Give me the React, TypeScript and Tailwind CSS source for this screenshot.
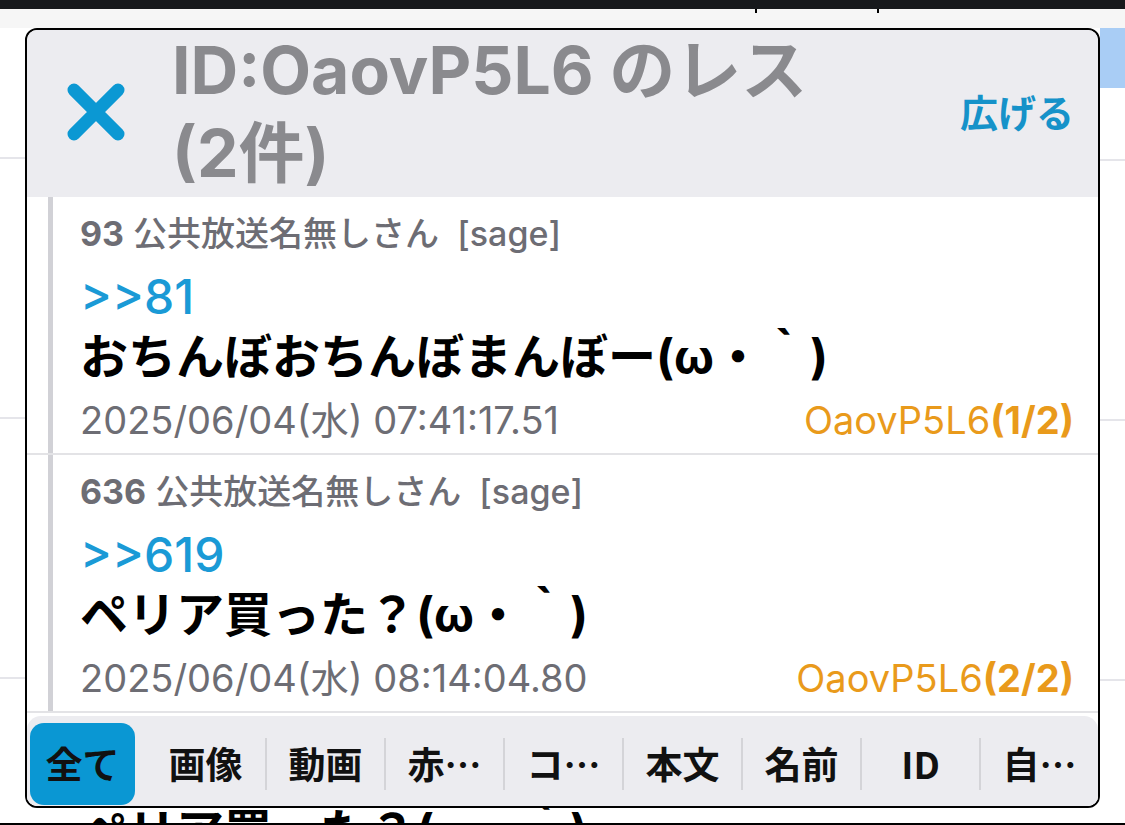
import React from "react";

type Post = {
  no: string;
  anchor: string;
  body: string;
  date: string;
  id: string;
  count: string;
};

const posts: Post[] = [
  {
    no: "93",
    anchor: ">>81",
    body: "おちんぼおちんぼまんぼー(ω・｀)",
    date: "2025/06/04(水) 07:41:17.51",
    id: "OaovP5L6",
    count: "(1/2)",
  },
  {
    no: "636",
    anchor: ">>619",
    body: "ペリア買った？(ω・｀)",
    date: "2025/06/04(水) 08:14:04.80",
    id: "OaovP5L6",
    count: "(2/2)",
  },
];

const tabs = ["全て", "画像", "動画", "赤…", "コ…", "本文", "名前", "ID", "自…"];

function CloseIcon() {
  return (
    <svg width="58" height="58" viewBox="0 0 58 58" fill="none">
      <path
        d="M7 7L51 51M51 7L7 51"
        stroke="#0b98d3"
        strokeWidth="13"
        strokeLinecap="round"
      />
    </svg>
  );
}

function PostRow({ post }: { post: Post }) {
  return (
    <div className="flex border-b-2 border-[#e3e3e6]">
      <div className="w-[21px] shrink-0" />
      <div className="w-[5px] shrink-0 bg-[#d1d1d6]" />
      <div className="flex-1 min-w-0 pl-[27px] pr-[24px] pt-[12px] pb-[4px]">
        <div className="h-[48px] flex items-center text-[34px] font-medium text-[#6d6d74] whitespace-nowrap">
          <span className="font-bold">{post.no}</span>
          <span>&nbsp;公共放送名無しさん&nbsp;&nbsp;[sage]</span>
        </div>
        <div className="mt-[10px] h-[60px] leading-[60px] text-[48px] font-medium text-[#1a9ad6]">
          {post.anchor}
        </div>
        <div className="h-[60px] leading-[60px] text-[48px] font-bold text-black whitespace-nowrap">
          {post.body}
        </div>
        <div className="h-[62px] pt-[5px] flex items-center justify-between text-[38px] whitespace-nowrap">
          <span className="text-[#6d6d74]">{post.date}</span>
          <span className="text-[#e99a1b]">
            {post.id}
            <span className="font-bold">{post.count}</span>
          </span>
        </div>
      </div>
    </div>
  );
}

function TabBar() {
  return (
    <div className="pt-[3px] bg-white">
      <div className="h-[90px] rounded-t-[14px] bg-[#ececf0] flex pt-[7px] pb-[1px] font-[family-name:'Noto_Sans_CJK_JP',sans-serif] font-bold text-[37px] text-[#111]">
        {tabs.map((t, i) => (
          <div key={t} className="flex-1 flex items-center min-w-0">
            {i >= 2 && <div className="w-[2px] h-[52px] bg-[#d4d4d8] shrink-0" />}
            {i === 0 ? (
              <div className="ml-[3px] mr-[11px] flex-1 h-[82px] rounded-[14px] bg-[#0a97d3] flex items-center justify-center">
                {t}
              </div>
            ) : (
              <div className="flex-1 flex items-center justify-center">{t}</div>
            )}
          </div>
        ))}
      </div>
    </div>
  );
}

function Modal() {
  return (
    <div className="w-[1075px] h-[780px] shrink-0 border-2 border-black rounded-[12px] overflow-hidden flex flex-col bg-white">
      <div className="h-[167px] shrink-0 bg-[#ececf0] flex items-start pl-[40px] pr-[24px]">
        <div className="self-center mt-[-4px]">
          <CloseIcon />
        </div>
        <div className="ml-[47px] flex-1 text-[66px] font-bold text-[#8a8a8e] whitespace-nowrap">
          <div className="h-[80px] leading-[80px]">ID:OaovP5L6 のレス</div>
          <div className="h-[87px] leading-[87px]">(2件)</div>
        </div>
        <div className="self-center text-[38px] font-bold text-[#1592c9]">広げる</div>
      </div>
      <div className="flex-1 flex flex-col">
        {posts.map((p) => (
          <PostRow key={p.no} post={p} />
        ))}
        <TabBar />
      </div>
    </div>
  );
}

export default function App() {
  return (
    <div className="w-[1125px] h-[825px] overflow-hidden bg-white flex flex-col font-[family-name:Inter,'Noto_Sans_CJK_JP',sans-serif]">
      <div className="h-[9px] shrink-0 bg-[#17191c]" />
      <div className="h-[19px] shrink-0 bg-[#f6f6f6] flex items-start">
        <div className="ml-[755px] w-[2px] h-[4px] bg-black" />
        <div className="ml-[120px] w-[2px] h-[4px] bg-black" />
      </div>
      <div className="h-[780px] shrink-0 flex">
        <div className="w-[25px] shrink-0 flex flex-col">
          <div className="h-[129px]" />
          <div className="h-[2px] bg-[#e5e5ea]" />
          <div className="h-[258px]" />
          <div className="h-[2px] bg-[#e5e5ea]" />
          <div className="h-[258px]" />
          <div className="h-[2px] bg-[#e5e5ea]" />
        </div>
        <Modal />
        <div className="w-[25px] shrink-0 flex flex-col">
          <div className="h-[60px] bg-[#a9cdf5]" />
          <div className="h-[71px]" />
          <div className="h-[2px] bg-[#e5e5ea]" />
          <div className="h-[258px]" />
          <div className="h-[2px] bg-[#e5e5ea]" />
          <div className="h-[258px]" />
          <div className="h-[2px] bg-[#e5e5ea]" />
        </div>
      </div>
      <div className="h-[17px] shrink-0 flex flex-col">
        <div className="h-[15px] overflow-hidden pl-[80px]">
          <div className="-mt-[6px] text-[48px] leading-[60px] font-bold text-black whitespace-nowrap">
            ペリア買った？(ω・｀)
          </div>
        </div>
        <div className="h-[2px] bg-black" />
      </div>
    </div>
  );
}
